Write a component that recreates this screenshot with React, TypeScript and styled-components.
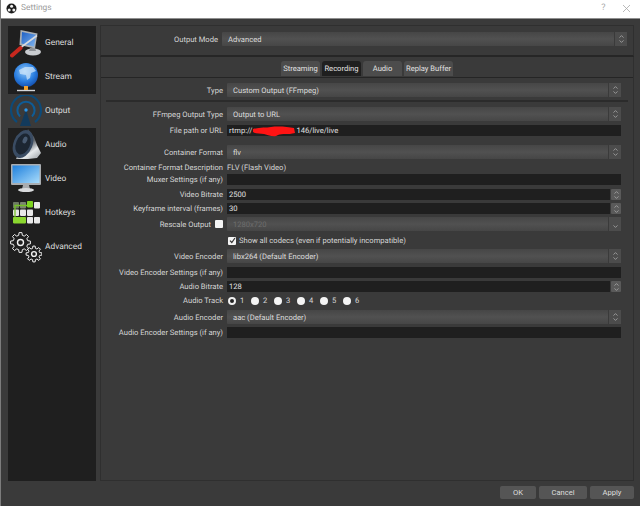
import { ReactNode } from 'react';
import styled, { createGlobalStyle } from 'styled-components';

const gearPath = (cx: number, cy: number, outer: number, inner: number, teeth: number) => {
  const points: string[] = [];
  for (let i = 0; i < teeth; i++) {
    const step = (Math.PI * 2) / teeth;
    const a = i * step;
    const corners: [number, number][] = [
      [inner, a - step * 0.32],
      [outer, a - step * 0.18],
      [outer, a + step * 0.18],
      [inner, a + step * 0.32],
    ];
    corners.forEach(([r, t]) => {
      points.push(`${(cx + Math.cos(t) * r).toFixed(2)} ${(cy + Math.sin(t) * r).toFixed(2)}`);
    });
  }
  return `M${points.join('L')}Z`;
};

const GeneralIcon = () => (
  <svg width="32" height="32" viewBox="0 0 32 32">
    <defs>
      <linearGradient id="generalScreen" x1="0" y1="0" x2="1" y2="1">
        <stop offset="0" stopColor="#1d5fc4" />
        <stop offset="1" stopColor="#7fb4ee" />
      </linearGradient>
    </defs>
    <ellipse cx="23" cy="25" rx="8" ry="3.4" fill="#c9ccd0" />
    <path d="M20 21l5 0 1 3-7 0z" fill="#8d9196" />
    <path d="M10.5 3l17 3.5-2.5 15-15.5-3.5z" fill="#aab0b6" />
    <path d="M12 5l14 2.8-2 11.7-12.6-2.9z" fill="url(#generalScreen)" />
    <path d="M10 21L27 8.5" stroke="#d8dade" strokeWidth="1.6" />
    <path d="M2 28.5L10.5 21" stroke="#c8281e" strokeWidth="4" strokeLinecap="round" />
  </svg>
);

const StreamIcon = () => (
  <svg width="32" height="32" viewBox="0 0 32 32">
    <defs>
      <radialGradient id="streamGlobe" cx="0.45" cy="0.35" r="0.75">
        <stop offset="0" stopColor="#8fc6f7" />
        <stop offset="0.55" stopColor="#2b7fe0" />
        <stop offset="1" stopColor="#0c3f9e" />
      </radialGradient>
    </defs>
    <circle cx="16" cy="14" r="12" fill="url(#streamGlobe)" />
    <path d="M9 9l6-3 8 0 3 4-5 2-1 5-3 2-1-5-6-1z" fill="#d6e9fb" opacity="0.7" />
    <path d="M7 29.5h18" stroke="#d4d6d9" strokeWidth="1.4" />
    <rect x="14" y="25" width="4" height="4" fill="#f3a32e" />
  </svg>
);

const OutputIcon = () => (
  <svg width="32" height="32" viewBox="0 0 32 32" fill="none">
    <path d="M7 27A15 15 0 1 1 25 27" stroke="#0d4a78" strokeWidth="2.2" />
    <path d="M10 21.5A8.6 8.6 0 1 1 22 21.5" stroke="#0f5c96" strokeWidth="2" />
    <path d="M16 15l5 16H10z" fill="#123a5c" />
    <circle cx="16" cy="15" r="1.7" fill="#2b97ea" />
  </svg>
);

const AudioIcon = () => (
  <svg width="32" height="32" viewBox="0 0 32 32">
    <defs>
      <linearGradient id="audioBody" x1="0.1" y1="0" x2="0.7" y2="1">
        <stop offset="0" stopColor="#30353c" />
        <stop offset="0.55" stopColor="#5f656c" />
        <stop offset="0.8" stopColor="#e6e9eb" />
        <stop offset="1" stopColor="#b7bbbf" />
      </linearGradient>
    </defs>
    <path d="M18 0l6 8 3 8 4 8-4 5-9 1-12 0z" fill="url(#audioBody)" />
    <ellipse cx="13" cy="15" rx="9.5" ry="14.5" transform="rotate(22 13 15)" fill="#3a4c63" />
    <ellipse cx="13" cy="15" rx="7" ry="11" transform="rotate(22 13 15)" fill="#1c2632" />
    <ellipse cx="15" cy="11" rx="2.2" ry="3.6" transform="rotate(22 15 11)" fill="#485a70" />
  </svg>
);

const VideoIcon = () => (
  <svg width="32" height="32" viewBox="0 0 32 32">
    <defs>
      <linearGradient id="videoScreen" x1="0" y1="0" x2="1" y2="1">
        <stop offset="0" stopColor="#1e7fdc" />
        <stop offset="1" stopColor="#a9dcfb" />
      </linearGradient>
    </defs>
    <path d="M13 22h6l1 4h-8z" fill="#a8abae" />
    <ellipse cx="16" cy="27" rx="8" ry="2" fill="#d9dbdd" />
    <rect x="1" y="1" width="30" height="21" rx="1" fill="#a9adb1" />
    <rect x="2.5" y="2.5" width="27" height="17.5" fill="url(#videoScreen)" />
  </svg>
);

const hotkeyCells: [number, number, number, string][] = [
  [3, 5, 6, '#6d7a62'],
  [10, 5, 6, '#7b8571'],
  [17, 4, 6, '#7ed321'],
  [24, 5, 6, '#e9e9e9'],
  [3, 12.5, 6, '#e4e6e1'],
  [10, 12.5, 6, '#e9e9e9'],
  [17, 12.5, 6, '#e9e9e9'],
  [3, 20, 13, '#8bd72f'],
  [17, 20, 6, '#e9e9e9'],
  [24, 20, 6, '#e9e9e9'],
];

const HotkeysIcon = () => (
  <svg width="32" height="32" viewBox="0 0 32 32">
    {hotkeyCells.map(([x, y, w, fill]) => (
      <rect key={`${x}-${y}`} x={x} y={y} width={w} height="6.4" rx="0.8" fill={fill} />
    ))}
    <path d="M5 20V8.5h12" fill="none" stroke="#74c026" strokeWidth="1.3" />
  </svg>
);

const AdvancedIcon = () => (
  <svg width="32" height="32" viewBox="0 0 32 32" fill="none" stroke="#f1f1f1" strokeWidth="1">
    <path d={gearPath(10.5, 11.5, 10, 7.4, 8)} />
    <circle cx="10.5" cy="11.5" r="3" strokeWidth="1.4" />
    <path d={gearPath(24, 23, 8, 5.8, 8)} />
    <circle cx="24" cy="23" r="2.4" strokeWidth="1.4" />
  </svg>
);

const ObsLogo = () => (
  <svg width="11" height="11" viewBox="0 0 11 11">
    <circle cx="5.5" cy="5.5" r="5" fill="#1c1c1c" />
    <circle cx="5.6" cy="3.2" r="1.5" fill="#f2f2f2" />
    <circle cx="3.2" cy="6.9" r="1.5" fill="#f2f2f2" />
    <circle cx="7.8" cy="6.9" r="1.5" fill="#f2f2f2" />
  </svg>
);

const Chevrons = ({ single }: { single?: boolean }) => (
  <svg width="7" height="10" viewBox="0 0 7 10" fill="none" stroke="#a9a9a9" strokeWidth="0.8">
    {!single && <path d="M1.5 3.6L3.5 1.6L5.5 3.6" />}
    <path d="M1.5 6.4L3.5 8.4L5.5 6.4" />
  </svg>
);

const GlobalStyle = createGlobalStyle`
  html, body {
    margin: 0;
    padding: 0;
    background: #3a3a3a;
  }
  * {
    box-sizing: border-box;
  }
`;

const Window = styled.div`
  width: 640px;
  height: 506px;
  overflow: hidden;
  display: flex;
  flex-direction: column;
  background: #3a3a3a;
  border-left: 1px solid #7c7c7c;
  font-family: Roboto, 'Liberation Sans', sans-serif;
  font-size: 7.6px;
  text-rendering: geometricPrecision;
  color: #d6d6d6;
`;

const TitleBar = styled.div`
  height: 19px;
  flex: none;
  display: flex;
  align-items: center;
  gap: 4px;
  padding: 0 9px 2px 5px;
  background: #ffffff;
  border-bottom: 1px solid #8f8f8f;
`;

const TitleText = styled.span`
  flex: 1;
  font-size: 8.4px;
  color: #9b9b9b;
`;

const TitleAction = styled.span`
  width: 29px;
  text-align: center;
  font-size: 9px;
  color: #a8a8a8;
`;

const CloseIcon = styled.svg`
  display: block;
`;

const Body = styled.div`
  flex: 1;
  min-height: 0;
  display: flex;
  gap: 4px;
  padding: 6px 0 0 7px;
`;

const Sidebar = styled.nav`
  width: 88px;
  margin-top: 1px;
  background: #1f1f1f;
`;

const SideItem = styled.div<{ $active?: boolean }>`
  height: 34px;
  display: flex;
  align-items: center;
  gap: 3px;
  padding: 0 0 1px 2px;
  font-size: 8.4px;
  color: #dddddd;
  background: ${({ $active }) => ($active ? '#3a3a3a' : 'transparent')};
`;

const Main = styled.main`
  width: 534px;
  display: flex;
  flex-direction: column;
`;

const TopGroup = styled.section`
  height: 32px;
  flex: none;
  display: grid;
  grid-template-columns: 116px 1fr;
  gap: 4px;
  align-items: center;
  padding: 0 6px 3px 1px;
  border: 1px solid #2f2f2f;
  border-bottom: 2px solid #262626;
`;

const Panel = styled.section`
  flex: 1;
  min-height: 0;
  border: 1px solid #2f2f2f;
  border-top: 0;
`;

const TabBar = styled.div`
  height: 21px;
  display: flex;
  align-items: flex-end;
  gap: 2px;
  padding: 0 0 1px 180px;
  border-bottom: 1px solid #252525;
`;

const Tab = styled.div<{ $active?: boolean; $width: number }>`
  width: ${({ $width }) => $width}px;
  height: 15px;
  display: flex;
  align-items: center;
  justify-content: center;
  border-radius: 3px 3px 0 0;
  color: #e2e2e2;
  background: ${({ $active }) => ($active ? '#1f1f1f' : '#4c4c4c')};
`;

const Form = styled.div`
  display: flex;
  flex-direction: column;
  gap: 3px;
  padding: 5px 5px 0;
`;

const Row = styled.div<{ $extra?: number; $height: number }>`
  display: grid;
  grid-template-columns: 117px 1fr;
  gap: 4px;
  align-items: center;
  height: ${({ $height }) => $height}px;
  margin-top: ${({ $extra }) => $extra ?? 0}px;
  padding-right: 7px;
`;

const Label = styled.label`
  text-align: right;
  white-space: nowrap;
`;

const Divider = styled.div`
  height: 2px;
  margin: 0 0 2px;
  background: #2b2b2b;
`;

const ComboBox = styled.div<{ $disabled?: boolean; $height?: number }>`
  height: ${({ $height }) => $height ?? 14}px;
  display: flex;
  align-items: center;
  padding-left: 6px;
  color: ${({ $disabled }) => ($disabled ? '#6d6d6d' : '#dcdcdc')};
  background: linear-gradient(#464646, #515151 50%, #464646);
  border-radius: 1px;
`;

const ComboText = styled.span`
  flex: 1;
`;

const ComboArrow = styled.span`
  width: 13px;
  height: 100%;
  display: flex;
  align-items: center;
  justify-content: center;
  border-left: 1px solid #3a3a3a;
  background: #4c4c4c;
`;

const LineEdit = styled.div`
  height: 11px;
  display: flex;
  align-items: center;
  padding-left: 2px;
  background: #1f1f1f;
  color: #e0e0e0;
  white-space: nowrap;
`;

const SpinRow = styled.div`
  height: 11px;
  display: flex;
  gap: 1px;
`;

const SpinField = styled(LineEdit)`
  flex: 1;
`;

const SpinButtons = styled.span`
  width: 10px;
  display: flex;
  align-items: center;
  justify-content: center;
  border-radius: 1px;
  background: #5a5a5a;
`;

const Redaction = styled.svg`
  flex: none;
  margin: 1px 1px 0 0;
  overflow: visible;
`;

const LabelWithBox = styled.div`
  display: flex;
  align-items: center;
  justify-content: flex-end;
  gap: 4px;
`;

const CheckBox = styled.span<{ $checked?: boolean }>`
  width: 8px;
  height: 8px;
  flex: none;
  display: flex;
  align-items: center;
  justify-content: center;
  background: #f4f4f4;
  border-radius: 1px;
`;

const CheckLine = styled.div`
  display: flex;
  align-items: center;
  gap: 3px;
  padding-left: 1px;
`;

const RadioGroup = styled.div`
  display: flex;
  align-items: center;
  padding-left: 1px;
`;

const RadioItem = styled.span`
  width: 23px;
  display: flex;
  align-items: center;
  gap: 4px;
`;

const Radio = styled.span<{ $checked?: boolean }>`
  width: 8px;
  height: 8px;
  border-radius: 50%;
  background: ${({ $checked }) => ($checked ? '#222222' : '#f4f4f4')};
  border: ${({ $checked }) => ($checked ? '2px solid #f0f0f0' : '0')};
`;

const Footer = styled.footer`
  height: 25px;
  flex: none;
  display: flex;
  justify-content: flex-end;
  gap: 3px;
  padding: 5px 6px 0 0;
`;

const Button = styled.button<{ $width: number }>`
  width: ${({ $width }) => $width}px;
  height: 13px;
  padding: 0;
  border: 0;
  border-radius: 2px;
  background: #555555;
  color: #dedede;
  font: inherit;
`;

const Combo = ({ children, disabled, single }: { children: ReactNode; disabled?: boolean; single?: boolean }) => (
  <ComboBox $disabled={disabled}>
    <ComboText>{children}</ComboText>
    <ComboArrow>
      <Chevrons single={single} />
    </ComboArrow>
  </ComboBox>
);

const Spin = ({ value }: { value: string }) => (
  <SpinRow>
    <SpinField>{value}</SpinField>
    <SpinButtons>
      <Chevrons />
    </SpinButtons>
  </SpinRow>
);

const sideItems = [
  { name: 'General', icon: <GeneralIcon /> },
  { name: 'Stream', icon: <StreamIcon /> },
  { name: 'Output', icon: <OutputIcon />, active: true },
  { name: 'Audio', icon: <AudioIcon /> },
  { name: 'Video', icon: <VideoIcon /> },
  { name: 'Hotkeys', icon: <HotkeysIcon /> },
  { name: 'Advanced', icon: <AdvancedIcon /> },
];

const tabs = [
  { name: 'Streaming', width: 39 },
  { name: 'Recording', width: 39, active: true },
  { name: 'Audio', width: 39 },
  { name: 'Replay Buffer', width: 49 },
];

const App = () => (
  <>
    <GlobalStyle />
    <Window>
      <TitleBar>
        <ObsLogo />
        <TitleText>Settings</TitleText>
        <TitleAction>?</TitleAction>
        <CloseIcon width="9" height="9" viewBox="0 0 9 9" stroke="#a8a8a8" strokeWidth="0.8">
          <path d="M1 1L8 8M8 1L1 8" />
        </CloseIcon>
      </TitleBar>
      <Body>
        <Sidebar>
          {sideItems.map((item) => (
            <SideItem key={item.name} $active={item.active}>
              {item.icon}
              {item.name}
            </SideItem>
          ))}
        </Sidebar>
        <Main>
          <TopGroup>
            <Label>Output Mode</Label>
            <Combo>Advanced</Combo>
          </TopGroup>
          <Panel>
            <TabBar>
              {tabs.map((tab) => (
                <Tab key={tab.name} $active={tab.active} $width={tab.width}>
                  {tab.name}
                </Tab>
              ))}
            </TabBar>
            <Form>
              <Row $height={14}>
                <Label>Type</Label>
                <Combo>Custom Output (FFmpeg)</Combo>
              </Row>
              <Divider />
              <Row $height={14}>
                <Label>FFmpeg Output Type</Label>
                <Combo>Output to URL</Combo>
              </Row>
              <Row $height={11} $extra={1}>
                <Label>File path or URL</Label>
                <LineEdit>
                  rtmp://
                  <Redaction width="43" height="11" viewBox="0 0 43 11">
                    <path
                      d="M1 3C8 1 14 2 19 1C27 0 36 1 42 2L43 7C36 9 30 7 26 9C22 12 17 9 12 8C8 7 3 8 1 6Z"
                      fill="#ff1414"
                    />
                  </Redaction>
                  146/live/live
                </LineEdit>
              </Row>
              <Row $height={14} $extra={6}>
                <Label>Container Format</Label>
                <Combo>flv</Combo>
              </Row>
              <Row $height={8} $extra={1}>
                <Label>Container Format Description</Label>
                <span>FLV (Flash Video)</span>
              </Row>
              <Row $height={11}>
                <Label>Muxer Settings (if any)</Label>
                <LineEdit />
              </Row>
              <Row $height={11} $extra={1}>
                <Label>Video Bitrate</Label>
                <Spin value="2500" />
              </Row>
              <Row $height={11}>
                <Label>Keyframe interval (frames)</Label>
                <Spin value="30" />
              </Row>
              <Row $height={14}>
                <LabelWithBox>
                  <Label>Rescale Output</Label>
                  <CheckBox />
                </LabelWithBox>
                <Combo disabled single>
                  1280x720
                </Combo>
              </Row>
              <Row $height={9} $extra={2}>
                <span />
                <CheckLine>
                  <CheckBox $checked>
                    <svg width="7" height="7" viewBox="0 0 7 7" fill="none" stroke="#333333" strokeWidth="1.2">
                      <path d="M1 3.6L2.8 5.5L6 1" />
                    </svg>
                  </CheckBox>
                  Show all codecs (even if potentially incompatible)
                </CheckLine>
              </Row>
              <Row $height={14} $extra={1}>
                <Label>Video Encoder</Label>
                <Combo>libx264 (Default Encoder)</Combo>
              </Row>
              <Row $height={11} $extra={1}>
                <Label>Video Encoder Settings (if any)</Label>
                <LineEdit />
              </Row>
              <Row $height={11}>
                <Label>Audio Bitrate</Label>
                <Spin value="128" />
              </Row>
              <Row $height={9} $extra={1}>
                <Label>Audio Track</Label>
                <RadioGroup>
                  {[1, 2, 3, 4, 5, 6].map((track) => (
                    <RadioItem key={track}>
                      <Radio $checked={track === 1} />
                      {track}
                    </RadioItem>
                  ))}
                </RadioGroup>
              </Row>
              <Row $height={14} $extra={2}>
                <Label>Audio Encoder</Label>
                <Combo>aac (Default Encoder)</Combo>
              </Row>
              <Row $height={11}>
                <Label>Audio Encoder Settings (if any)</Label>
                <LineEdit />
              </Row>
            </Form>
          </Panel>
        </Main>
      </Body>
      <Footer>
        <Button $width={36}>OK</Button>
        <Button $width={48}>Cancel</Button>
        <Button $width={44}>Apply</Button>
      </Footer>
    </Window>
  </>
);

export default App;
